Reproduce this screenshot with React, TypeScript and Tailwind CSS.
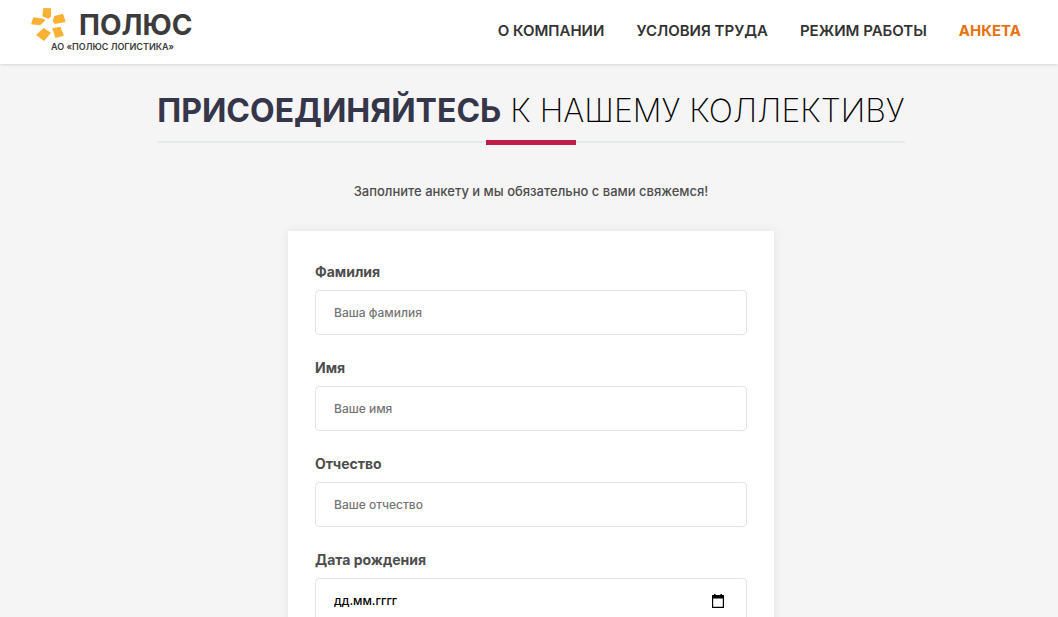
import { FC, useState } from "react";

const links = [
  { title: "О КОМПАНИИ", href: "#about" },
  { title: "УСЛОВИЯ ТРУДА", href: "#conditions" },
  { title: "РЕЖИМ РАБОТЫ", href: "#schedule" },
  { title: "АНКЕТА", href: "#form", active: true },
];

const fields = [
  { id: "surname", label: "Фамилия", placeholder: "Ваша фамилия" },
  { id: "name", label: "Имя", placeholder: "Ваше имя" },
  { id: "patronymic", label: "Отчество", placeholder: "Ваше отчество" },
  { id: "birthday", label: "Дата рождения", placeholder: "дд.мм.гггг", date: true },
];

const Logo: FC = () => (
  <a href="#top" className="flex flex-col pb-1 text-[#3c3c3d]">
    <span className="flex h-9 items-center gap-3">
      <svg viewBox="0 0 108 108" className="size-9 shrink-0" fill="#f9b233">
        <path d="M37 3 L60 4 L60 29 L52 35 L34 28 Z" />
        <path d="M70 27 L96 20 L104 45 L71 51 L65 42 Z" />
        <path d="M64 64 L88 59 L99 86 L73 93 Z" />
        <path d="M38 63 L60 77 L39 102 L15 84 Z" />
        <path d="M7 31 L37 35 L43 40 L28 55 L0 52 Z" />
      </svg>
      <span className="text-[28px] leading-9 font-bold">ПОЛЮС</span>
    </span>
    <span className="pl-5 text-[9px] leading-2 font-semibold">АО «ПОЛЮС ЛОГИСТИКА»</span>
  </a>
);

const Header: FC = () => (
  <header className="sticky top-0 z-10 flex h-16 items-center justify-between bg-white pr-[37px] pb-0.5 pl-[31px] shadow-[0_0_4px_rgba(0,0,0,0.2)]">
    <Logo />
    <nav className="flex gap-8">
      {links.map((link) => (
        <a
          key={link.href}
          href={link.href}
          className={`text-[15px] leading-5 ${link.active ? "font-bold text-[#e8710c]" : "font-semibold text-[#333333]"}`}
        >
          {link.title}
        </a>
      ))}
    </nav>
  </header>
);

const CalendarIcon: FC = () => (
  <svg viewBox="0 0 12 14" className="h-3.5 w-3" fill="#000">
    <path d="M2 0h1.5v1H8.500V0H10v1h2v13H0V1h2z M1.200 4.500v8.300h9.600V4.500z" fillRule="evenodd" />
  </svg>
);

const App: FC = () => {
  const [values, setValues] = useState<Record<string, string>>({});

  function handleChange(id: string, value: string) {
    setValues({ ...values, [id]: value });
  }

  return (
    <div id="top" className="min-h-screen bg-[#f5f5f5] font-['Inter','Noto_Sans',sans-serif]">
      <Header />

      <main id="form" className="flex flex-col items-center pt-[27px] pr-4 pb-12 pl-5">
        <h1 className="relative border-b-2 border-[#e6e9ea] pb-[10px] text-center text-[32px] leading-10 font-extralight text-black">
          <b className="font-bold text-[#35364a]">ПРИСОЕДИНЯЙТЕСЬ</b> К НАШЕМУ КОЛЛЕКТИВУ
          <span className="absolute -bottom-1 left-1/2 h-[5px] w-[90px] -translate-x-1/2 bg-[#bf1e4b]" />
        </h1>

        <p className="mt-9 text-[13px] leading-6 font-medium text-[#4d4d4d]">
          Заполните анкету и мы обязательно с вами свяжемся!
        </p>

        <form className="mt-7 flex w-full max-w-[486px] flex-col gap-[23px] bg-white px-[27px] pt-[31px] pb-8 shadow-[0_0_10px_rgba(0,0,0,0.08)]">
          {fields.map((field) => (
            <div key={field.id} className="flex flex-col gap-2">
              <label htmlFor={field.id} className="text-sm leading-5 font-bold text-[#4d4d4d]">
                {field.label}
              </label>
              <div className="flex h-[45px] items-center rounded border border-[#e3e3e3] pr-[22px] pl-[18px]">
                <input
                  id={field.id}
                  type="text"
                  value={values[field.id] || ""}
                  onChange={(e) => handleChange(field.id, e.target.value)}
                  placeholder={field.placeholder}
                  className={`min-w-0 flex-1 text-xs font-medium outline-none ${
                    field.date ? "placeholder:text-black" : "placeholder:text-[#757575]"
                  }`}
                />
                {field.date && (
                  <button type="button" aria-label="Выбрать дату" className="cursor-pointer">
                    <CalendarIcon />
                  </button>
                )}
              </div>
            </div>
          ))}
        </form>
      </main>
    </div>
  );
};

export default App;
